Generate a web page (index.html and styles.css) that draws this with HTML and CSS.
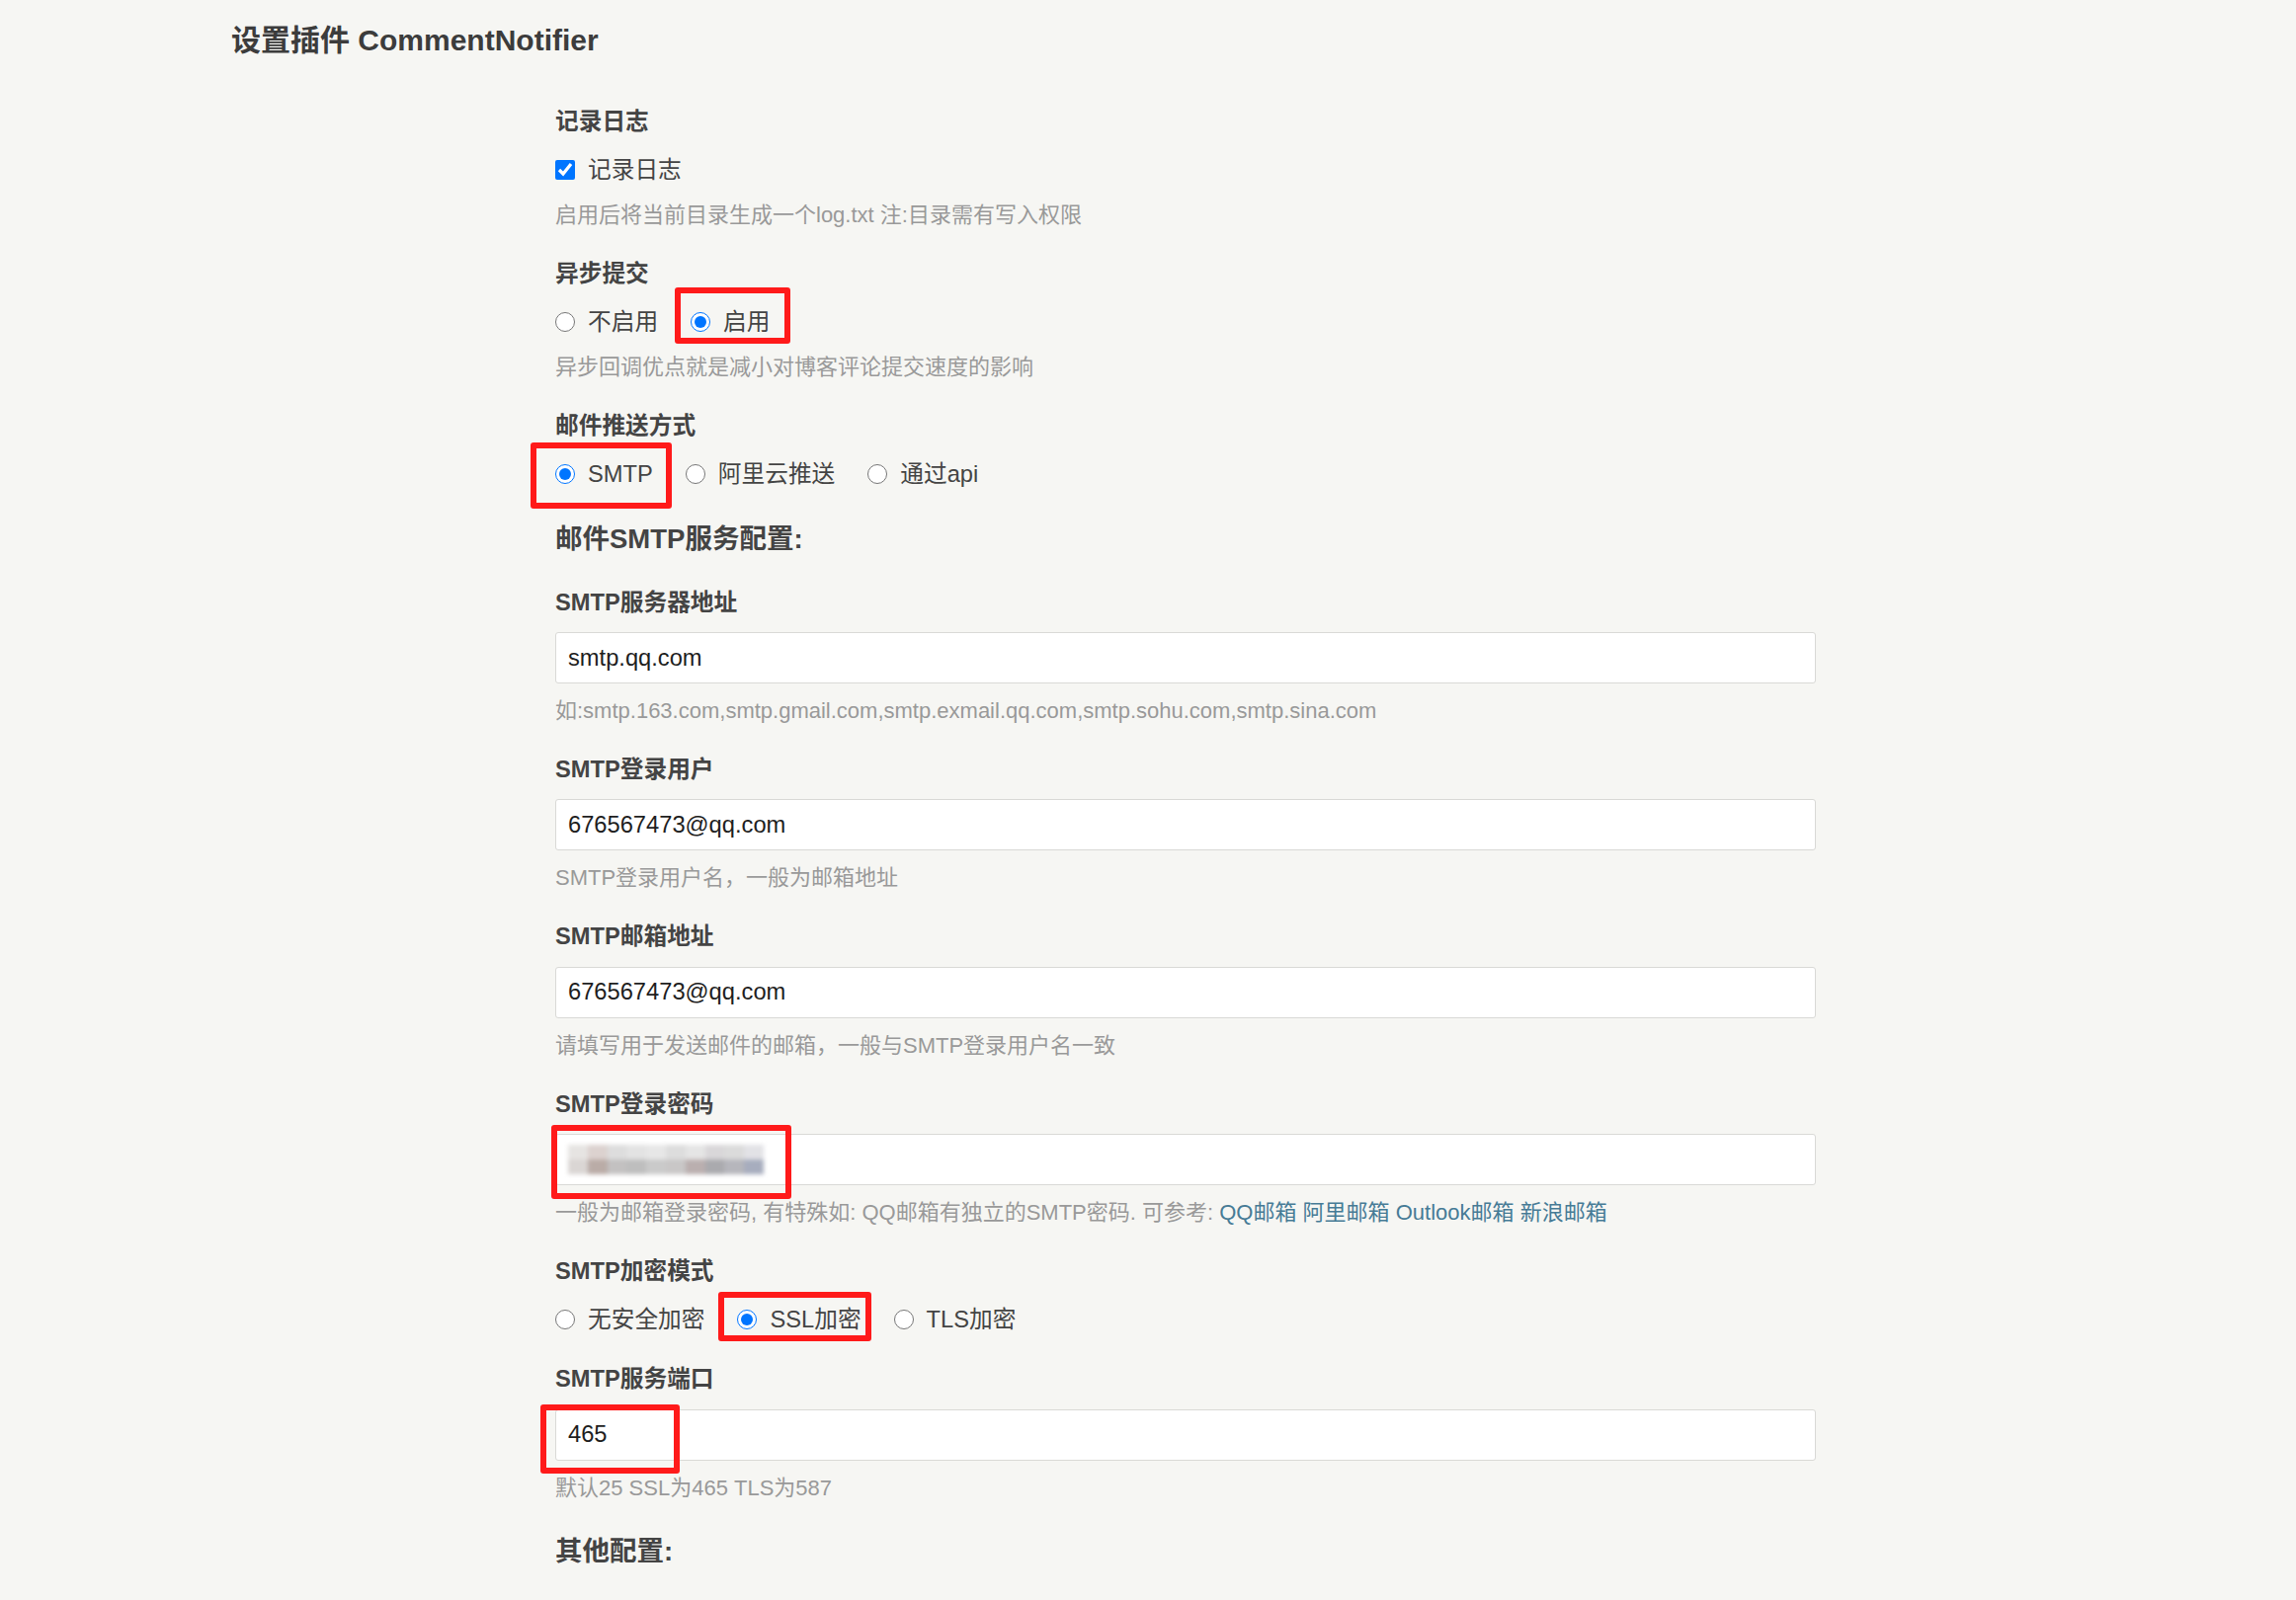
FILE: index.html
```html
<!DOCTYPE html>
<html lang="zh-CN">
<head>
<meta charset="utf-8">
<title>设置插件 CommentNotifier</title>
<link rel="stylesheet" href="styles.css">
</head>
<body>
<div class="page">
  <h2 class="page-title">设置插件 CommentNotifier</h2>
  <form class="settings">
    <ul class="option">
      <li>
        <label class="option-label">记录日志</label>
        <div class="choices">
          <span class="choice"><input type="checkbox" checked><label>记录日志</label></span>
        </div>
        <p class="description">启用后将当前目录生成一个log.txt 注:目录需有写入权限</p>
      </li>
    </ul>
    <ul class="option">
      <li>
        <label class="option-label">异步提交</label>
        <div class="choices">
          <span class="choice"><input type="radio" name="async"><label>不启用</label></span><span class="choice mark mark-async"><input type="radio" name="async" checked><label>启用</label></span>
        </div>
        <p class="description">异步回调优点就是减小对博客评论提交速度的影响</p>
      </li>
    </ul>
    <ul class="option">
      <li>
        <label class="option-label">邮件推送方式</label>
        <div class="choices">
          <span class="choice mark mark-smtp"><input type="radio" name="way" checked><label>SMTP</label></span><span class="choice"><input type="radio" name="way"><label>阿里云推送</label></span><span class="choice"><input type="radio" name="way"><label>通过api</label></span>
        </div>
      </li>
    </ul>
    <ul class="option">
      <li><label class="section-heading">邮件SMTP服务配置:</label></li>
    </ul>
    <ul class="option">
      <li>
        <label class="option-label">SMTP服务器地址</label>
        <input class="text" type="text" value="smtp.qq.com">
        <p class="description">如:smtp.163.com,smtp.gmail.com,smtp.exmail.qq.com,smtp.sohu.com,smtp.sina.com</p>
      </li>
    </ul>
    <ul class="option">
      <li>
        <label class="option-label">SMTP登录用户</label>
        <input class="text" type="text" value="676567473@qq.com">
        <p class="description">SMTP登录用户名，一般为邮箱地址</p>
      </li>
    </ul>
    <ul class="option">
      <li>
        <label class="option-label">SMTP邮箱地址</label>
        <input class="text" type="text" value="676567473@qq.com">
        <p class="description">请填写用于发送邮件的邮箱，一般与SMTP登录用户名一致</p>
      </li>
    </ul>
    <ul class="option">
      <li>
        <label class="option-label">SMTP登录密码</label>
        <div class="text field mark mark-pass"><span class="blurred"></span></div>
        <p class="description">一般为邮箱登录密码, 有特殊如: QQ邮箱有独立的SMTP密码. 可参考: <a href="#">QQ邮箱</a> <a href="#">阿里邮箱</a> <a href="#">Outlook邮箱</a> <a href="#">新浪邮箱</a></p>
      </li>
    </ul>
    <ul class="option">
      <li>
        <label class="option-label">SMTP加密模式</label>
        <div class="choices">
          <span class="choice"><input type="radio" name="secure"><label>无安全加密</label></span><span class="choice mark mark-ssl"><input type="radio" name="secure" checked><label>SSL加密</label></span><span class="choice"><input type="radio" name="secure"><label>TLS加密</label></span>
        </div>
      </li>
    </ul>
    <ul class="option">
      <li>
        <label class="option-label">SMTP服务端口</label>
        <div class="field-wrap mark mark-port"><input class="text" type="text" value="465"></div>
        <p class="description">默认25 SSL为465 TLS为587</p>
      </li>
    </ul>
    <ul class="option">
      <li><label class="section-heading">其他配置:</label></li>
    </ul>
  </form>
</div>
</body>
</html>
```
FILE: styles.css
```css
html, body {
  margin: 0;
  padding: 0;
  background: #F6F6F3;
}

body {
  font-family: "Liberation Sans", "Noto Sans CJK SC", sans-serif;
  color: #444;
  font-size: 23.7px;
  line-height: 1.55;
}

.page {
  padding: 17px 0 40px 234px;
}

.page-title {
  margin: 0 0 40px;
  font-size: 30px;
  line-height: 48px;
  font-weight: bold;
  color: #3c3c3c;
}

.settings {
  margin-left: 328px;
  width: 1276px;
}

.option {
  list-style: none;
  margin: 1em 0;
  padding: 0;
}

.option-label {
  display: block;
  margin-bottom: 0.5em;
  font-weight: bold;
  color: #444;
}

.section-heading {
  display: block;
  padding-top: 3px;
  font-size: 27.5px;
  font-weight: bold;
  color: #444;
}

.choices {
  display: flex;
  align-items: center;
}

.choice {
  display: inline-flex;
  align-items: center;
  gap: 13px;
  margin-right: 33px;
  color: #444;
}

.choice input {
  width: 20px;
  height: 20px;
  margin: 0;
  flex: none;
}

.description {
  margin: 0.5em 0 0;
  font-size: 22px;
  line-height: 1.55;
  color: #999;
}

.description a {
  color: #467B96;
  text-decoration: none;
}

.text {
  display: block;
  box-sizing: border-box;
  width: 100%;
  height: 52px;
  padding: 0 12px;
  border: 1px solid #D9D9D6;
  border-radius: 3px;
  background: #fff;
  font-family: "Liberation Sans", "Noto Sans CJK SC", sans-serif;
  font-size: 23.7px;
  color: #1e1e1e;
  outline: none;
}

.field {
  display: flex;
  align-items: center;
}

.blurred {
  display: block;
  width: 198px;
  height: 30px;
  filter: blur(2px);
  background:
    linear-gradient(to right,
      #e6e4e2 0 10%, #dcd2cf 10% 20%, #dddddd 20% 30%, #e3e3e3 30% 40%, #e7e7e7 40% 50%,
      #dddddd 50% 60%, #e5e5e5 60% 70%, #d9d7d9 70% 80%, #dbdbdb 80% 90%, #e2e2e6 90% 100%) top / 100% 50% no-repeat,
    linear-gradient(to right,
      #dad6d4 0 10%, #baaca7 10% 20%, #c3c1c1 20% 30%, #bebebe 30% 40%, #cacaca 40% 50%,
      #c9c7c7 50% 60%, #baafaf 60% 70%, #aaaaae 70% 80%, #b6b6bc 80% 90%, #a7adbe 90% 100%) bottom / 100% 50% no-repeat;
}

.mark,
.field-wrap {
  position: relative;
}

.mark::after {
  content: "";
  position: absolute;
  box-sizing: border-box;
  border: 6px solid #ff1a1a;
  border-radius: 3px;
  pointer-events: none;
}

.mark-async::after {
  left: -16px;
  right: -21px;
  top: -17px;
  bottom: -4px;
}

.mark-smtp::after {
  left: -25px;
  right: -19px;
  top: -14px;
  bottom: -16px;
}

.mark-ssl::after {
  left: -19px;
  right: -10px;
  top: -10px;
  bottom: -4px;
}

.mark-pass::after {
  left: -5px;
  top: -10px;
  width: 243px;
  height: 75px;
}

.mark-port::after {
  left: -15px;
  top: -5px;
  width: 141px;
  height: 70px;
}
```
